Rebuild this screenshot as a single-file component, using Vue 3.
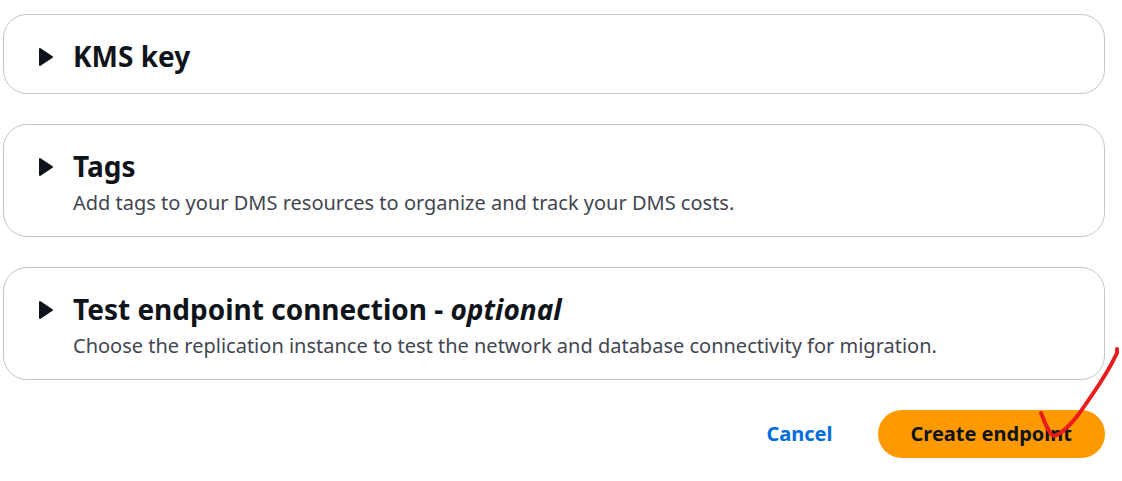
<!--
  EndpointForm — 创建端点页面的底部区域
  三个可展开的面板 + 取消 / 创建按钮
-->

<template>
  <main class="endpoint-form">
    <!-- 可展开面板 -->
    <section v-for="panel in panels" :key="panel.key" class="panel">
      <button
        type="button"
        class="panel-toggle"
        :aria-expanded="openKey === panel.key"
        :aria-label="panel.title"
        @click="toggle(panel.key)"
      >
        <svg class="caret" viewBox="0 0 19 20" aria-hidden="true">
          <path d="M4 2 L16 10 L4 18 Z" />
        </svg>
      </button>
      <div class="panel-text">
        <h2>{{ panel.title }}<template v-if="panel.optional"> - <em>optional</em></template></h2>
        <p v-if="panel.description">{{ panel.description }}</p>
      </div>
    </section>

    <!-- 操作按钮 -->
    <div class="actions">
      <button type="button" class="btn-link">Cancel</button>
      <button type="button" class="btn-primary">
        Create endpoint
        <!-- 手绘红色对勾，盖在按钮右上方 -->
        <svg class="check-mark" viewBox="0 0 84 96" aria-hidden="true">
          <path d="M5 69 C8 76 11 85 15 90 Q17 93 21 91 C34 84 46 66 56 51 Q72 28 81 9 L81 5" />
        </svg>
      </button>
    </div>
  </main>
</template>

<script setup>
import { ref } from 'vue'

/** 面板配置：optional 为 true 时标题后显示斜体 optional */
const panels = [
  { key: 'kms', title: 'KMS key' },
  {
    key: 'tags',
    title: 'Tags',
    description: 'Add tags to your DMS resources to organize and track your DMS costs.'
  },
  {
    key: 'test',
    title: 'Test endpoint connection',
    optional: true,
    description: 'Choose the replication instance to test the network and database connectivity for migration.'
  }
]

/** 当前展开的面板 */
const openKey = ref('')

function toggle(key) {
  openKey.value = openKey.value === key ? '' : key
}
</script>

<style>
body {
  background: #fff;
}
</style>

<style scoped>
.endpoint-form {
  display: flex;
  flex-direction: column;
  gap: 30px;
  padding: 14px 17px 23px 3px;
  overflow: hidden;
  font-family: "Noto Sans", "Open Sans", sans-serif;
  color: #0f141a;
}

/* ---------- 面板 ---------- */
.panel {
  display: flex;
  align-items: flex-start;
  gap: 18px;
  padding: 24px 32px 0;
  border: 1px solid #c6c6cd;
  border-radius: 24px;
}

.panel-toggle {
  display: flex;
  align-items: center;
  height: 36px;
  padding: 0;
  border: none;
  background: none;
  color: inherit;
  cursor: pointer;
}

.caret {
  width: 19px;
  height: 20px;
  fill: currentColor;
  stroke: currentColor;
  stroke-width: 2;
  stroke-linejoin: round;
}

.panel-text {
  padding-bottom: 20px;
}

.panel h2 {
  margin: 0;
  font-size: 28px;
  font-weight: 700;
  line-height: 34px;
}

.panel p {
  margin: 6px 0 0;
  font-size: 20px;
  line-height: 27px;
  color: #424650;
}

/* ---------- 底部按钮 ---------- */
.actions {
  display: flex;
  justify-content: flex-end;
  gap: 12px;
}

.actions button {
  padding: 0 33px;
  border: none;
  border-radius: 24px;
  font-family: inherit;
  font-size: 20px;
  font-weight: 700;
  line-height: 48px;
  cursor: pointer;
}

.btn-link {
  background: none;
  color: #006ce0;
}

.actions .btn-primary {
  position: relative;
  background: #ff9900;
  color: #0f141a;
}

.check-mark {
  position: absolute;
  right: -15px;
  bottom: 18px;
  width: 84px;
  height: 96px;
  fill: none;
  stroke: #e81c1c;
  stroke-width: 4;
  stroke-linecap: round;
  stroke-linejoin: round;
  pointer-events: none;
}
</style>
